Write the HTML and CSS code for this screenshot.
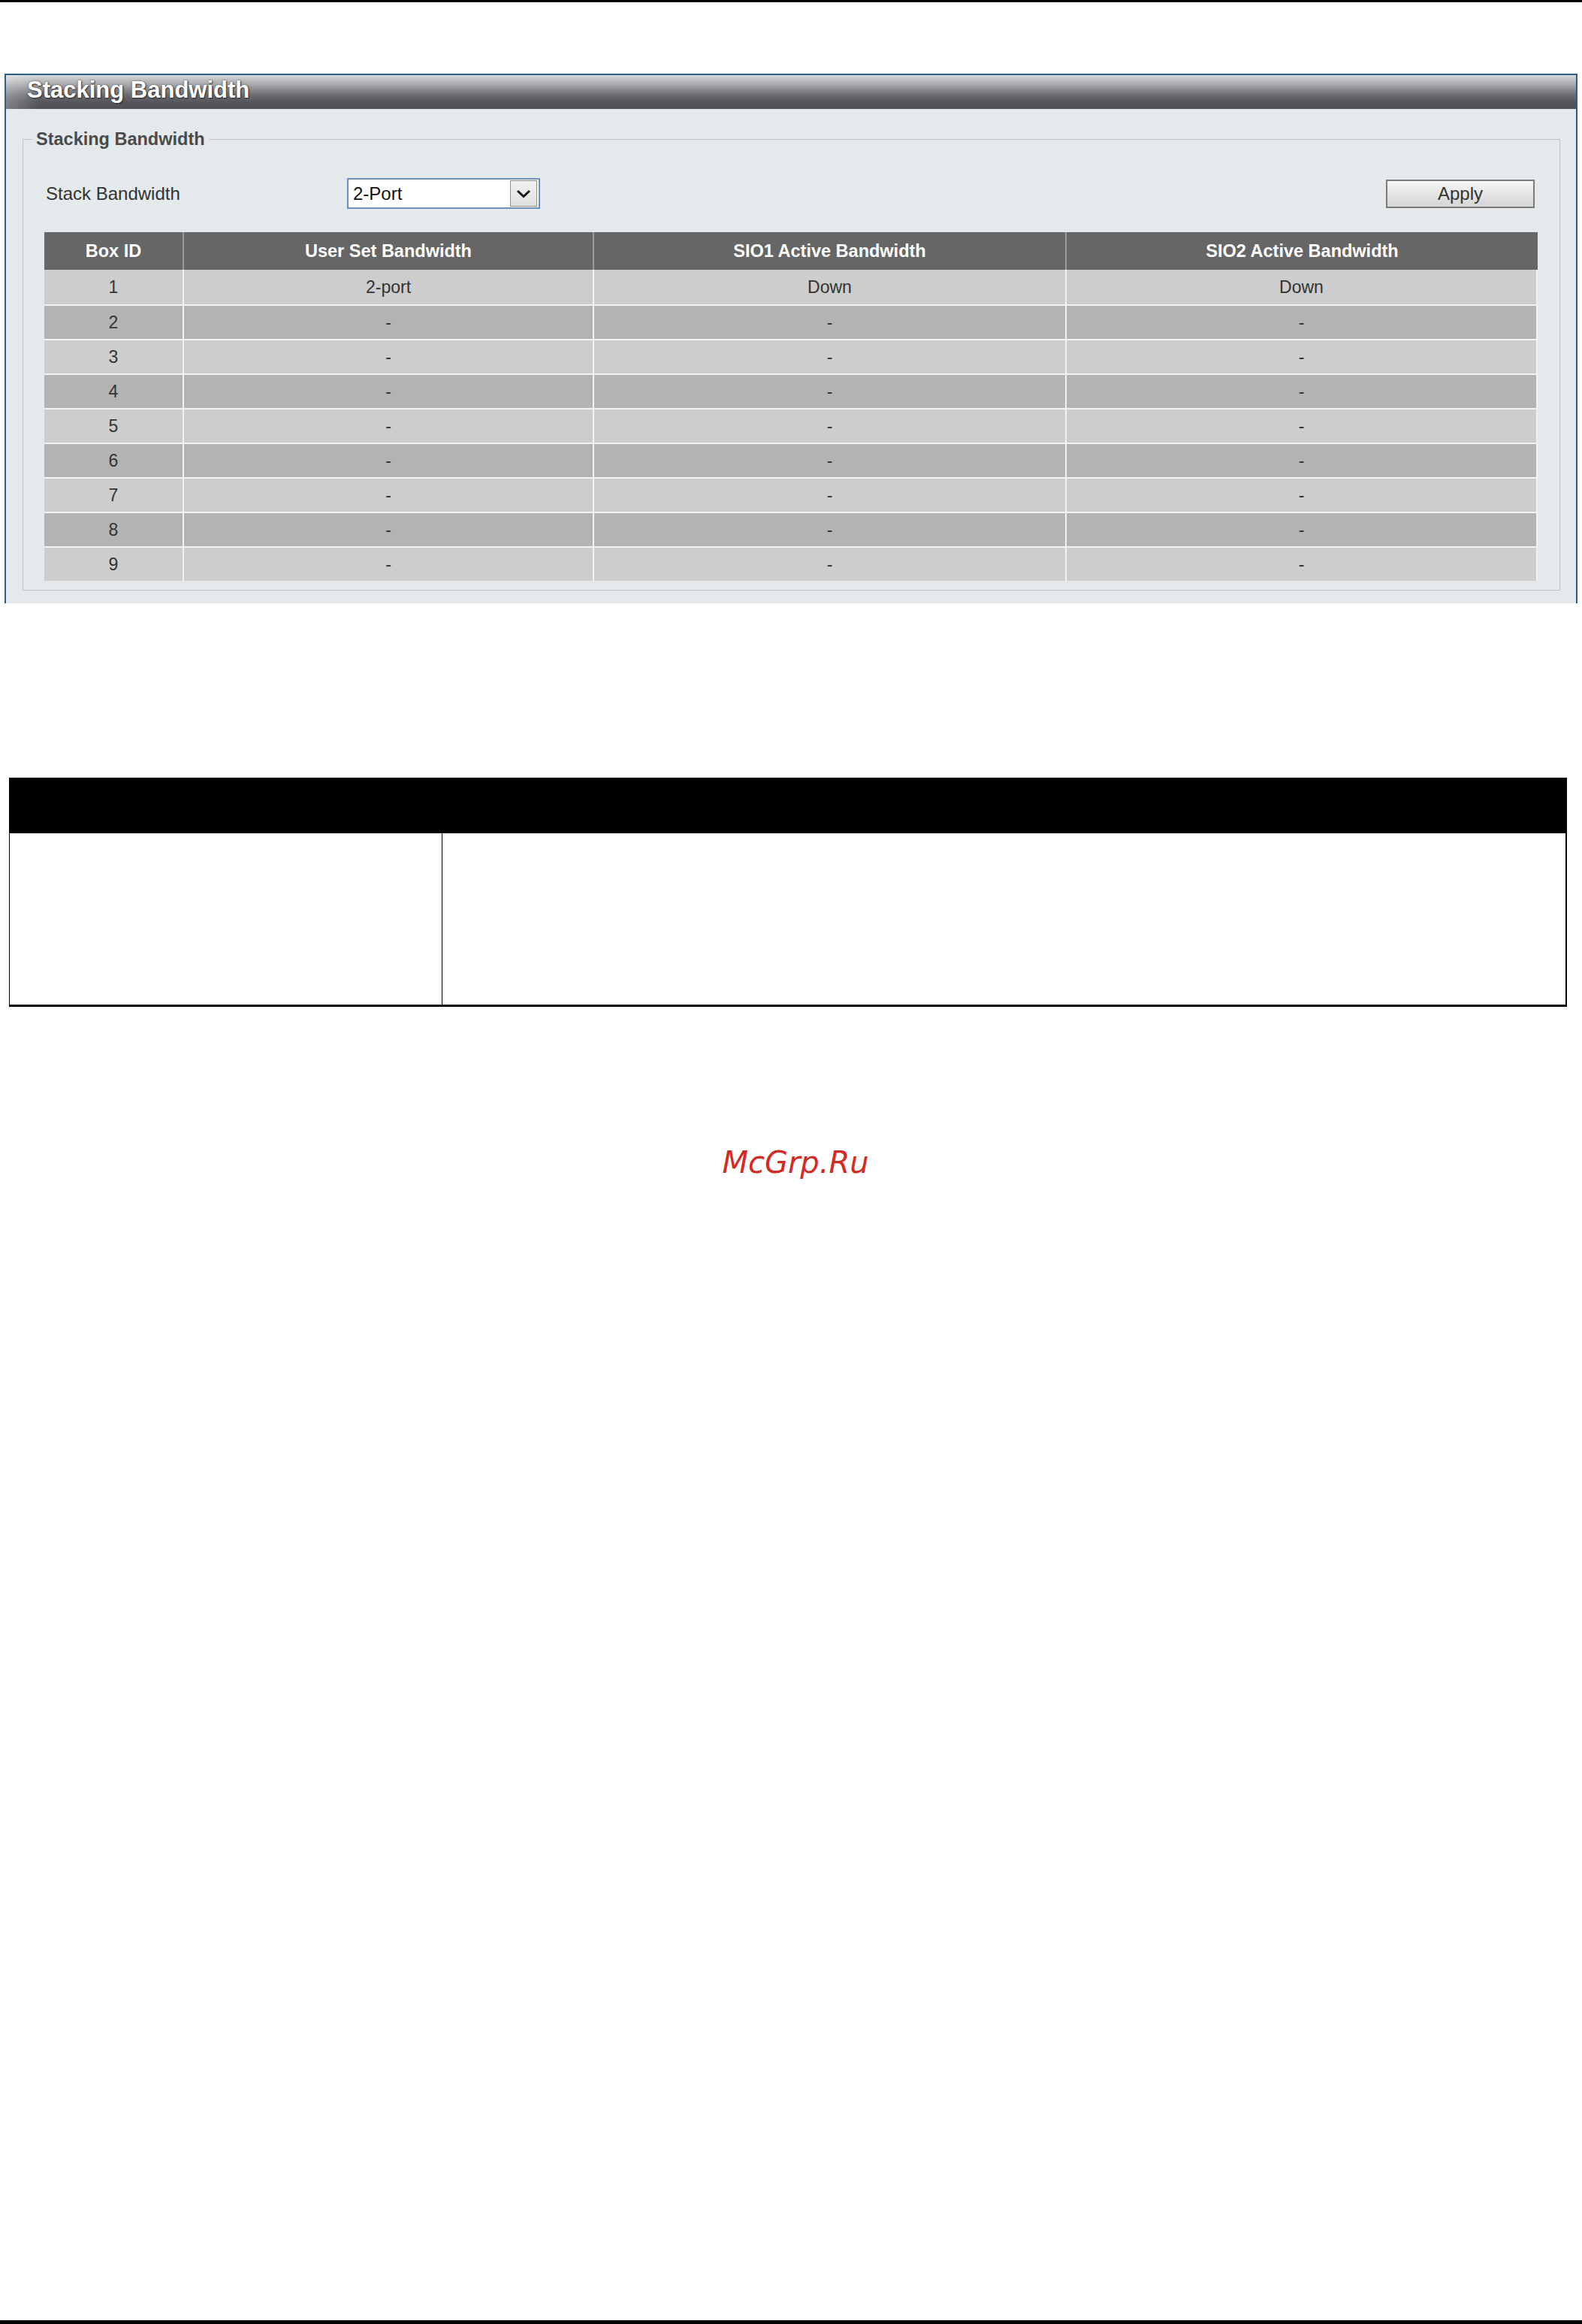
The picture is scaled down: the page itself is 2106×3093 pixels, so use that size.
FILE: index.html
```html
<!DOCTYPE html>
<html lang="en">
<head>
<meta charset="utf-8">
<title>Stacking Bandwidth</title>
<link rel="stylesheet" href="styles.css">
</head>
<body>
<div class="page">
  <div class="rule-top"></div>

  <section class="panel">
    <div class="panel-title">Stacking Bandwidth</div>
    <fieldset class="group">
      <legend class="group-legend">Stacking Bandwidth</legend>
      <div class="group-body">
        <div class="control-row">
          <div class="control-label">Stack Bandwidth</div>
          <div class="select">
            <span class="select-value">2-Port</span>
            <span class="select-arrow">
              <svg width="20" height="12" viewBox="0 0 20 12"><path d="M2 2 L10 9.5 L18 2" fill="none" stroke="#1a1a1a" stroke-width="3" stroke-linejoin="miter"/></svg>
            </span>
          </div>
          <button class="btn-apply" type="button">Apply</button>
        </div>

        <table class="data">
          <colgroup>
            <col class="c1"><col class="c2"><col class="c3"><col class="c4">
          </colgroup>
          <thead>
            <tr><th>Box ID</th><th>User Set Bandwidth</th><th>SIO1 Active Bandwidth</th><th>SIO2 Active Bandwidth</th></tr>
          </thead>
          <tbody>
            <tr><td>1</td><td>2-port</td><td>Down</td><td>Down</td></tr>
            <tr><td>2</td><td>-</td><td>-</td><td>-</td></tr>
            <tr><td>3</td><td>-</td><td>-</td><td>-</td></tr>
            <tr><td>4</td><td>-</td><td>-</td><td>-</td></tr>
            <tr><td>5</td><td>-</td><td>-</td><td>-</td></tr>
            <tr><td>6</td><td>-</td><td>-</td><td>-</td></tr>
            <tr><td>7</td><td>-</td><td>-</td><td>-</td></tr>
            <tr><td>8</td><td>-</td><td>-</td><td>-</td></tr>
            <tr><td>9</td><td>-</td><td>-</td><td>-</td></tr>
          </tbody>
        </table>
      </div>
    </fieldset>
  </section>

  <table class="doc-table">
    <colgroup><col class="d1"><col class="d2"></colgroup>
    <thead><tr><th></th><th></th></tr></thead>
    <tbody><tr><td></td><td></td></tr></tbody>
  </table>

  <div class="watermark">McGrp.Ru</div>

  <div class="rule-bottom"></div>
</div>
</body>
</html>
```

FILE: styles.css
```css
html, body {
  margin: 0;
  padding: 0;
  background: #ffffff;
}

.page {
  min-height: 3093px;
  display: flex;
  flex-direction: column;
  font-family: "Liberation Sans", Arial, sans-serif;
}

.rule-top {
  height: 3px;
  background: #000;
}

.rule-bottom {
  margin-top: auto;
  height: 5px;
  background: #000;
}

/* ---------- panel ---------- */
.panel {
  margin: 95px 6px 0 6px;
  border: 2px solid #2f5d85;
  border-bottom: none;
  background: #e4e9eb;
  display: flex;
  flex-direction: column;
}

.panel-title {
  height: 45px;
  box-sizing: border-box;
  padding: 0 0 6px 28px;
  line-height: 39px;
  font-size: 31px;
  font-weight: bold;
  color: #ffffff;
  text-shadow: 1px 1px 2px #2a2a2a, 0 0 2px #444;
  background:
    linear-gradient(to right, rgba(255,255,255,0.28), rgba(255,255,255,0) 45px),
    linear-gradient(to bottom, #d6d7d8 0%, #a6a8ab 28%, #6b6d71 58%, #55565b 80%, #4f5055 100%);
}

.group {
  margin: 26px 21px 17px 22px;
  padding: 0;
  border: 1px solid #bcc6ca;
  min-width: 0;
}

.group-legend {
  margin-left: 12px;
  padding: 0 5px;
  font-size: 23.5px;
  line-height: 28px;
  font-weight: bold;
  color: #4a4a4a;
}

.group-body {
  padding: 0 29px 12px 28px;
}

.control-row {
  margin-top: 38px;
  height: 41px;
  padding: 0 4px 0 2px;
  display: flex;
  align-items: center;
}

.control-label {
  flex: 0 0 401px;
  font-size: 24px;
  color: #333333;
}

.select {
  width: 257px;
  height: 41px;
  box-sizing: border-box;
  border: 2px solid #6f8fba;
  background: #ffffff;
  display: flex;
  align-items: center;
  justify-content: space-between;
  padding: 0 2px 0 6px;
}

.select-value {
  font-size: 24px;
  color: #111111;
}

.select-arrow {
  width: 36px;
  height: 35px;
  box-sizing: border-box;
  border: 1px solid #8d8d8d;
  background: linear-gradient(to bottom, #f2f2f2, #e0e0e0);
  display: flex;
  align-items: center;
  justify-content: center;
}

.btn-apply {
  margin-left: auto;
  width: 198px;
  height: 38px;
  border: 2px solid #7a7a7a;
  border-radius: 0;
  background: linear-gradient(to bottom, #f6f6f6 0%, #e6e6e6 50%, #d5d5d5 100%);
  font-family: "Liberation Sans", Arial, sans-serif;
  font-size: 24px;
  color: #333333;
  padding: 0;
}

/* ---------- data table ---------- */
.data {
  margin-top: 31px;
  width: 1988px;
  table-layout: fixed;
  border-collapse: separate;
  border-spacing: 0;
}

.data col.c1 { width: 184px; }
.data col.c2 { width: 546px; }
.data col.c3 { width: 629px; }
.data col.c4 { width: 629px; }

.data th {
  height: 50px;
  padding: 0;
  background: #666666;
  color: #ffffff;
  font-size: 23.5px;
  font-weight: bold;
  text-align: center;
  vertical-align: middle;
}

.data th + th {
  border-left: 2px solid #9a9a9a;
}

.data tbody tr {
  height: 46px;
}

.data td {
  padding: 0;
  font-size: 23px;
  color: #333333;
  text-align: center;
  vertical-align: middle;
  background: #cdcdcd;
}

.data td + td {
  border-left: 2px solid #f2f2f2;
}

.data td:last-child {
  border-right: 2px solid #f2f2f2;
}

.data tbody tr + tr td {
  border-top: 2px solid #f2f2f2;
}

.data tbody tr:nth-child(even) td {
  background: #b3b3b3;
}

/* ---------- document table ---------- */
.doc-table {
  margin: 232px 0 0 12px;
  width: 2074px;
  table-layout: fixed;
  border-collapse: collapse;
  border-left: 1px solid #000;
  border-right: 2px solid #000;
  border-bottom: 3px solid #000;
}

.doc-table col.d1 { width: 576px; }

.doc-table th {
  height: 74px;
  padding: 0;
  background: #000;
}

.doc-table td {
  height: 228px;
  padding: 0;
}

.doc-table td + td {
  border-left: 1px solid #000;
}

/* ---------- watermark ---------- */
.watermark {
  margin-top: 183px;
  padding-left: 12px;
  text-align: center;
  font-family: "DejaVu Sans", sans-serif;
  font-style: italic;
  font-size: 40px;
  line-height: 48px;
  color: #d42a24;
}
```
